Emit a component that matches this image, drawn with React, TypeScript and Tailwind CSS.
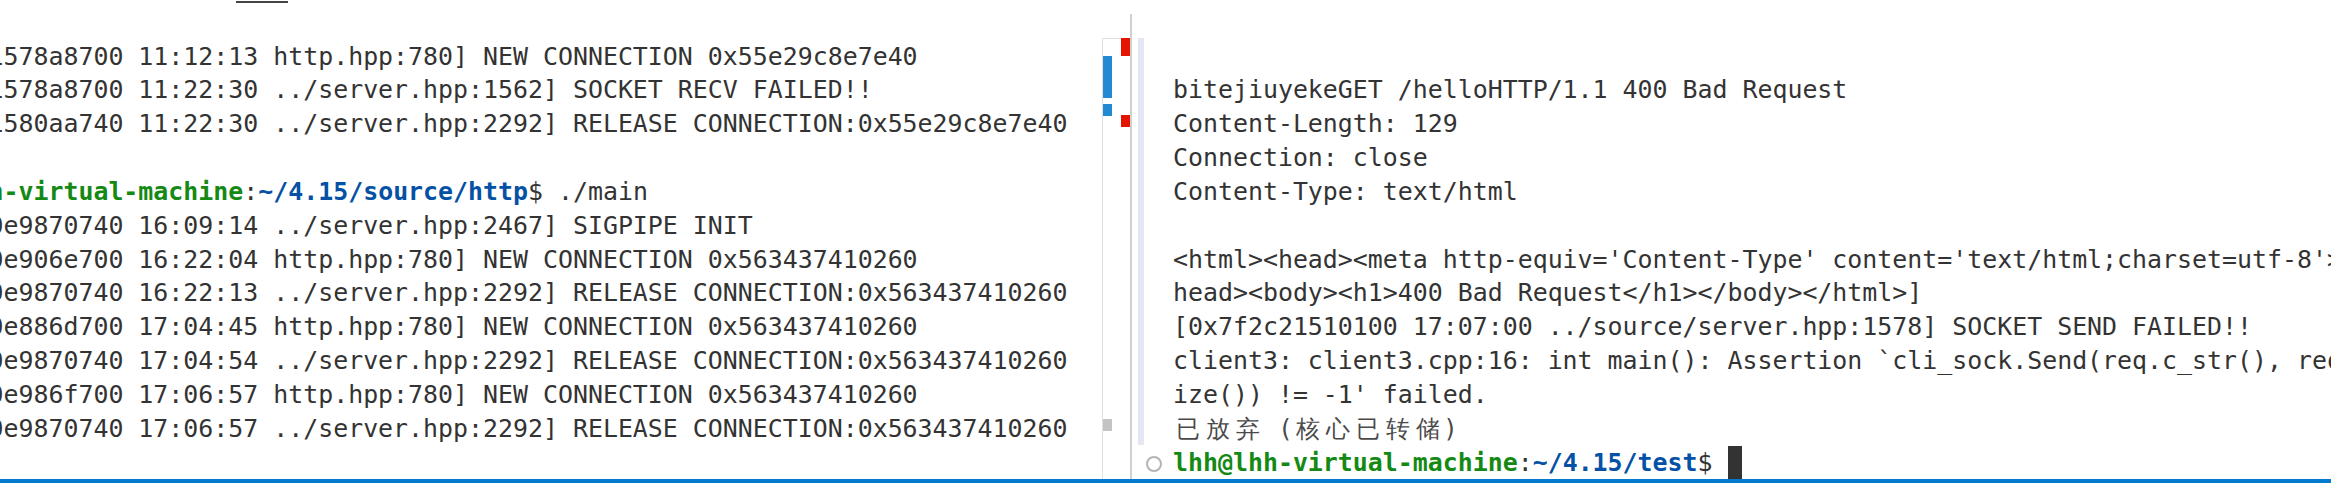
import React from 'react';

const LEFT_LINES: string[] = [
  '1578a8700 11:12:13 http.hpp:780] NEW CONNECTION 0x55e29c8e7e40',
  '1578a8700 11:22:30 ../server.hpp:1562] SOCKET RECV FAILED!!',
  '1580aa740 11:22:30 ../server.hpp:2292] RELEASE CONNECTION:0x55e29c8e7e40',
  '',
  '__PROMPT__',
  '0e9870740 16:09:14 ../server.hpp:2467] SIGPIPE INIT',
  '0e906e700 16:22:04 http.hpp:780] NEW CONNECTION 0x563437410260',
  '0e9870740 16:22:13 ../server.hpp:2292] RELEASE CONNECTION:0x563437410260',
  '0e886d700 17:04:45 http.hpp:780] NEW CONNECTION 0x563437410260',
  '0e9870740 17:04:54 ../server.hpp:2292] RELEASE CONNECTION:0x563437410260',
  '0e986f700 17:06:57 http.hpp:780] NEW CONNECTION 0x563437410260',
  '0e9870740 17:06:57 ../server.hpp:2292] RELEASE CONNECTION:0x563437410260',
];

const RIGHT_LINES: string[] = [
  '',
  'bitejiuyekeGET /helloHTTP/1.1 400 Bad Request',
  'Content-Length: 129',
  'Connection: close',
  'Content-Type: text/html',
  '',
  "<html><head><meta http-equiv='Content-Type' content='text/html;charset=utf-8'></",
  'head><body><h1>400 Bad Request</h1></body></html>]',
  '[0x7f2c21510100 17:07:00 ../source/server.hpp:1578] SOCKET SEND FAILED!!',
  'client3: client3.cpp:16: int main(): Assertion `cli_sock.Send(req.c_str(), req.s',
  "ize()) != -1' failed.",
];

// terminal cells: wide chars take two columns
const CJK_CELLS: [string, number][] = [
  ['已', 30],
  ['放', 30],
  ['弃', 30],
  [' ', 15],
  ['(', 15],
  ['核', 30],
  ['心', 30],
  ['已', 30],
  ['转', 30],
  ['储', 30],
  [')', 15],
];

const Row: React.FC<{ children?: React.ReactNode }> = ({ children }) => (
  <div className="h-[33.85px] whitespace-pre">{children}</div>
);

const Prompt: React.FC<{ user: string; path: string; cmd?: string }> = ({ user, path, cmd }) => (
  <>
    <span className="font-bold text-[#148a14]">{user}</span>
    <span>:</span>
    <span className="font-bold text-[#0451a5]">{path}</span>
    <span>$ {cmd}</span>
  </>
);

const OverviewRuler: React.FC = () => (
  <div className="relative mt-[38px] w-[28px] shrink-0 border-l border-t border-[#e0e0e0]">
    <div className="absolute left-0 top-[17px] h-[42px] w-[9px] bg-[#2289d4]" />
    <div className="absolute left-0 top-[65px] h-[12px] w-[9px] bg-[#2289d4]" />
    <div className="absolute right-0 top-[-1px] h-[18px] w-[9px] bg-[#e51400]" />
    <div className="absolute right-0 top-[76px] h-[12px] w-[9px] bg-[#e51400]" />
    <div className="absolute left-0 top-[380px] h-[12px] w-[9px] bg-[#c4c4c4]" />
  </div>
);

export default function App() {
  return (
    <div className="flex h-[483px] w-[2331px] flex-col overflow-hidden bg-white font-['DejaVu_Sans_Mono',monospace] text-[24.9px] leading-[33.85px] text-[#333333]">
      <div className="flex min-h-0 flex-1">
        {/* left terminal */}
        <div className="flex w-[1102px] shrink-0 flex-col overflow-hidden">
          <div className="ml-[236px] mt-[1px] h-[2px] w-[52px] bg-[#444444]" />
          <div className="ml-[-11.5px] mt-[36.5px]">
            {LEFT_LINES.map((line, i) => (
              <Row key={i}>
                {line === '__PROMPT__' ? (
                  <Prompt user="h-virtual-machine" path="~/4.15/source/http" cmd="./main" />
                ) : (
                  line
                )}
              </Row>
            ))}
          </div>
        </div>

        <OverviewRuler />

        {/* sash */}
        <div className="mt-[14px] w-[2px] shrink-0 bg-[#d0d0d0]" />

        {/* right terminal */}
        <div className="flex min-w-0 flex-1 overflow-hidden">
          <div className="flex w-[41px] shrink-0 flex-col pt-[38px]">
            <div className="ml-[6px] h-[407px] w-[6px] bg-[#e4e6f1]" />
            <div className="ml-[14px] mt-[11px] h-[16px] w-[16px] rounded-full border-[2.5px] border-[#b4b4b4]" />
          </div>
          <div className="mt-[39.5px] min-w-0 flex-1">
            {RIGHT_LINES.map((line, i) => (
              <Row key={i}>{line}</Row>
            ))}
            <Row>
              {CJK_CELLS.map(([ch, w], i) => (
                <span
                  key={i}
                  className={
                    'inline-block text-center font-[\'Noto_Sans_CJK_SC\',sans-serif] font-light text-[24px] text-[#4a4a4a] ' +
                    (w === 30 ? 'w-[30px]' : 'w-[15px]')
                  }
                >
                  {ch}
                </span>
              ))}
            </Row>
            <Row>
              <Prompt user="lhh@lhh-virtual-machine" path="~/4.15/test" />
              <span className="inline-block h-[34px] w-[14.5px] bg-[#333333] align-top" />
            </Row>
          </div>
        </div>
      </div>
      <div className="h-[4px] shrink-0 bg-[#007acc]" />
    </div>
  );
}
